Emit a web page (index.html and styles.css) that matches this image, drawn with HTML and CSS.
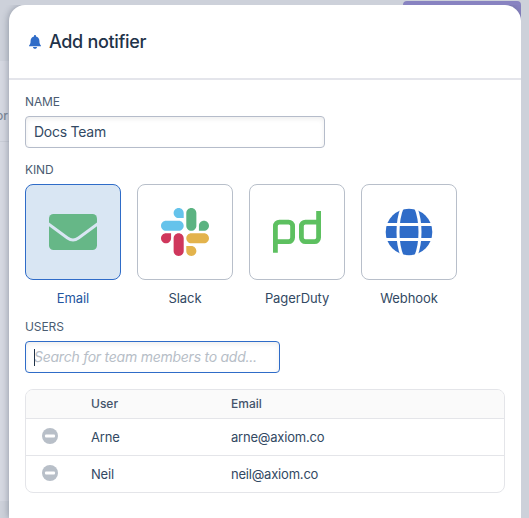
FILE: index.html
```html
<!DOCTYPE html>
<html lang="en">
<head>
<meta charset="utf-8">
<title>Add notifier</title>
<link rel="stylesheet" href="styles.css">
</head>
<body>
<div class="backdrop">
  <div class="backdrop-panel"><span class="backdrop-label">or</span></div>
  <div class="backdrop-button"></div>
</div>
<main class="modal">
  <header class="modal-header">
    <svg class="bell" viewBox="0 0 12 14"><path fill="#2f6cc8" d="M6 0c.6 0 1 .4 1 1v.5c2 .4 3.4 2 3.4 4.2 0 2.6.5 3.4 1.300 4.500.1.200.3.400.3.700v.3H0v-.3c0-.3.2-.5.3-.7C1.100 9.100 1.600 8.300 1.600 5.700 1.600 3.500 3 1.900 5 1.500V1c0-.6.4-1 1-1z"/><path fill="#2f6cc8" d="M4 12h4c0 1.100-.9 1.800-2 1.800S4 13.100 4 12z"/></svg>
    <h1>Add notifier</h1>
  </header>
  <form class="modal-body">
    <label class="label">NAME</label>
    <div class="field name-field">Docs Team</div>
    <label class="label kind-label">KIND</label>
    <div class="kinds">
      <div class="kind selected">
        <div class="card"><svg viewBox="0 0 48 48"><rect y="6" width="48" height="36" rx="4.500" fill="#66b787"/><path fill="none" stroke="#d9e6f3" stroke-width="3" d="M-2 15L18.500 30C22.500 32.800 25.500 32.800 29.500 30L50 15"/></svg></div>
        <span>Email</span>
      </div>
      <div class="kind">
        <div class="card"><svg viewBox="0 0 122.800 122.800">
          <path fill="#cf375c" d="M25.800 77.600c0 7.100-5.800 12.900-12.900 12.900S0 84.700 0 77.600s5.800-12.900 12.900-12.900h12.900zM32.300 77.600c0-7.100 5.800-12.900 12.900-12.900s12.900 5.800 12.900 12.900v32.300c0 7.100-5.800 12.900-12.900 12.900s-12.900-5.800-12.900-12.900z"/>
          <path fill="#65c3eb" d="M45.200 25.800c-7.100 0-12.900-5.800-12.900-12.900S38.100 0 45.200 0s12.900 5.800 12.900 12.900v12.900zM45.200 32.300c7.100 0 12.900 5.800 12.900 12.900s-5.800 12.900-12.900 12.900H12.900C5.800 58.100 0 52.300 0 45.200s5.800-12.900 12.900-12.900z"/>
          <path fill="#5bb381" d="M97 45.200c0-7.100 5.800-12.900 12.900-12.900s12.900 5.800 12.900 12.900-5.800 12.900-12.900 12.900H97zM90.500 45.200c0 7.100-5.800 12.900-12.900 12.900s-12.900-5.800-12.900-12.900V12.900C64.700 5.800 70.500 0 77.600 0s12.900 5.800 12.900 12.900z"/>
          <path fill="#e3b34c" d="M77.600 97c7.100 0 12.900 5.800 12.900 12.900s-5.800 12.900-12.900 12.900-12.900-5.800-12.900-12.900V97zM77.600 90.500c-7.100 0-12.900-5.800-12.900-12.900s5.800-12.900 12.900-12.900h32.300c7.100 0 12.900 5.800 12.900 12.900s-5.800 12.900-12.900 12.900z"/>
        </svg></div>
        <span>Slack</span>
      </div>
      <div class="kind">
        <div class="card"><svg viewBox="0 0 48 48"><g fill="none" stroke="#5dc060" stroke-width="4.800"><path d="M2.400 44.700V18.100a4 4 0 0 1 4-4h9.200a4 4 0 0 1 4 4v11.500a4 4 0 0 1-4 4H2.400"/><path d="M45.600 3v26.600a4 4 0 0 1-4 4h-9.200a4 4 0 0 1-4-4V18.100a4 4 0 0 1 4-4h13.200"/></g></svg></div>
        <span>PagerDuty</span>
      </div>
      <div class="kind">
        <div class="card"><svg viewBox="0 0 48 48"><circle cx="24" cy="24" r="23.300" fill="#2f6cc8"/><g fill="none" stroke="#fff" stroke-width="3"><path d="M0 16.500h48M0 31.500h48"/><path d="M17.500-1C11.500 13 11.500 35 17.500 49M30.500-1C36.500 13 36.500 35 30.500 49"/></g></svg></div>
        <span>Webhook</span>
      </div>
    </div>
    <label class="label users-label">USERS</label>
    <div class="field search-field"><span class="caret"></span>Search for team members to add...</div>
    <div class="table">
      <div class="row head"><span></span><span>User</span><span>Email</span></div>
      <div class="row"><svg class="minus" viewBox="0 0 16 16"><circle cx="8" cy="8" r="8" fill="#b8bfc8"/><rect x="3" y="6.500" width="10" height="3" rx="1" fill="#fff"/></svg><span>Arne</span><span>arne@axiom.co</span></div>
      <div class="row"><svg class="minus" viewBox="0 0 16 16"><circle cx="8" cy="8" r="8" fill="#b8bfc8"/><rect x="3" y="6.500" width="10" height="3" rx="1" fill="#fff"/></svg><span>Neil</span><span>neil@axiom.co</span></div>
    </div>
  </form>
</main>
</body>
</html>
```
FILE: styles.css
```css
* { box-sizing: border-box; }
body {
  margin: 0;
  height: 518px;
  overflow: hidden;
  padding: 5px 8px 0 9px;
  background: #cdd1da;
  font-family: Inter, "Liberation Sans", sans-serif;
  font-size: 13px;
  color: #324963;
}
.backdrop-panel {
  position: absolute;
  left: 0;
  top: 61px;
  width: 20px;
  height: 440px;
  background: linear-gradient(#c9cdd6, #c9cdd6) 0 80px / 100% 1px no-repeat #d5d8e1;
}
.backdrop-label {
  position: absolute;
  right: 12px;
  top: 47px;
  font-size: 12px;
  line-height: 16px;
  font-weight: 500;
  color: #7c8796;
}
.backdrop-button {
  position: absolute;
  left: 403px;
  top: 1px;
  width: 118px;
  height: 32px;
  border-radius: 4px;
  background: #8883c1;
}
.modal {
  position: relative;
  height: 513px;
  border-radius: 16px 16px 0 0;
  background: #fff;
  box-shadow: -1px 0 6px rgba(50, 60, 80, .35);
  clip-path: inset(0 0 0 -9px);
}
.modal-header {
  display: flex;
  align-items: center;
  height: 75px;
  padding-left: 20px;
  border-bottom: 2px solid #e4e5eb;
}
.bell { width: 12px; height: 14px; margin-right: 8px; }
h1 {
  margin: 0;
  font-size: 18px;
  font-weight: 500;
  line-height: 24px;
  letter-spacing: -.32px;
  color: #1f3349;
}
.modal-body { padding: 14px 16px 0; }
.label {
  display: block;
  font-size: 12px;
  line-height: 16px;
  letter-spacing: -.1px;
  color: #4b5c72;
}
.field {
  display: flex;
  align-items: center;
  height: 32px;
  padding: 0 8px 2px;
  border: 1px solid #b5bcca;
  border-radius: 4px;
  font-size: 14px;
  letter-spacing: -.25px;
  white-space: nowrap;
  box-shadow: inset 0 2px 5px rgba(0, 0, 0, .07);
}
.name-field { width: 300px; margin-top: 6px; }
.kind-label { margin-top: 14px; }
.kinds { display: flex; gap: 16px; margin-top: 6px; }
.kind {
  width: 96px;
  text-align: center;
  line-height: 16px;
  letter-spacing: -.1px;
}
.card {
  display: flex;
  align-items: center;
  justify-content: center;
  height: 96px;
  margin-bottom: 10px;
  border: 1px solid #b8bfca;
  border-radius: 8px;
}
.card svg { width: 48px; height: 48px; }
.selected { color: #2456a0; }
.selected .card { border-color: #2f6cc8; background: #d9e6f3; }
.users-label { margin-top: 13px; }
.search-field {
  position: relative;
  width: 255px;
  margin-top: 6px;
  border-color: #2f6cc8;
  font-style: italic;
  color: #b7bec7;
}
.caret {
  position: absolute;
  left: 8px;
  top: 7px;
  width: 1px;
  height: 17px;
  background: #1f3349;
}
.table {
  margin-top: 16px;
  border: 1px solid #e4e5e9;
  border-radius: 8px;
  overflow: hidden;
}
.row {
  display: grid;
  grid-template-columns: 65px 140px 1fr;
  align-items: center;
  height: 37px;
  letter-spacing: -.2px;
}
.row + .row { border-top: 1px solid #e4e5e9; }
.head {
  height: 28px;
  padding-bottom: 2px;
  background: #fafafa;
  font-size: 12px;
  font-weight: 500;
  letter-spacing: 0;
  color: #43536a;
}
.minus { width: 16px; height: 16px; margin: -3px 0 0 16px; }
```
